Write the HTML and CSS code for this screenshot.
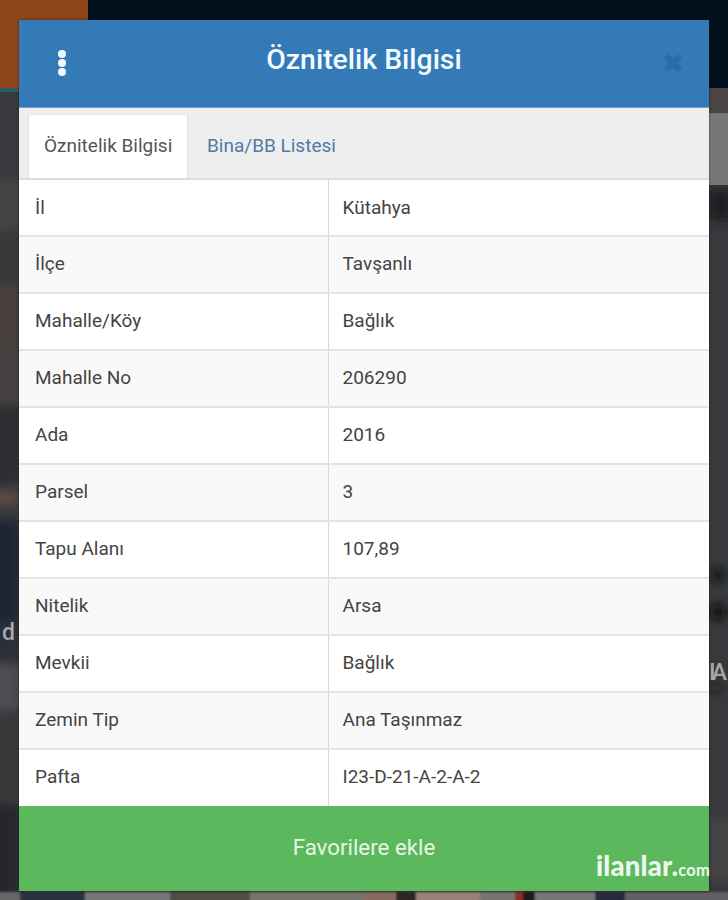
FILE: index.html
```html
<!DOCTYPE html>
<html lang="en">
<head>
  <meta charset="UTF-8" />
  <meta name="viewport" content="width=device-width, initial-scale=1.0"/>
  <title>Öznitelik Bilgisi</title>
  <link rel="stylesheet" href="styles.css">
</head>
<body>
  <!-- blurred aerial photo behind the dialog -->
  <svg class="map" width="728" height="900" viewBox="0 0 728 900" aria-hidden="true">
    <defs>
      <filter id="soft"><feGaussianBlur stdDeviation="5"/></filter>
      <filter id="slight"><feGaussianBlur stdDeviation="1"/></filter>
    </defs>
    <rect width="728" height="900" fill="#38393c"/>
    <g filter="url(#soft)">
      <rect x="-10" y="180" width="30" height="50" fill="#454546"/>
      <rect x="-10" y="232" width="30" height="50" fill="#39393b"/>
      <rect x="-10" y="285" width="30" height="60" fill="#4a3f3c"/>
      <rect x="-10" y="345" width="30" height="60" fill="#444042"/>
      <rect x="-10" y="405" width="30" height="80" fill="#2e2d30"/>
      <rect x="-10" y="490" width="30" height="16" fill="#5a4845"/>
      <rect x="-10" y="520" width="30" height="100" fill="#1f2531"/>
      <rect x="-10" y="620" width="30" height="40" fill="#2a2f3a"/>
      <rect x="-10" y="665" width="30" height="45" fill="#4d4e52"/>
      <rect x="-10" y="715" width="30" height="90" fill="#38393b"/>
      <rect x="-10" y="805" width="30" height="90" fill="#26272a"/>
      <circle cx="718" cy="575" r="7" fill="#111214"/>
      <circle cx="718" cy="612" r="8" fill="#0e0f11"/>
      <circle cx="715" cy="688" r="4" fill="#141517"/>
      <rect x="709" y="190" width="24" height="30" fill="#1d1f23"/>
      <rect x="709" y="820" width="24" height="60" fill="#454547"/>
    </g>
    <g filter="url(#slight)">
      <rect x="-4" y="892" width="24" height="12" fill="#666666"/>
      <rect x="20" y="892" width="65" height="12" fill="#2a3040"/>
      <rect x="85" y="892" width="85" height="12" fill="#77777a"/>
      <rect x="170" y="892" width="80" height="12" fill="#4f4d45"/>
      <rect x="250" y="892" width="114" height="12" fill="#77736d"/>
      <rect x="364" y="892" width="32" height="12" fill="#8a6a60"/>
      <rect x="396" y="892" width="20" height="12" fill="#2f2523"/>
      <rect x="416" y="892" width="64" height="12" fill="#9a8078"/>
      <rect x="480" y="892" width="35" height="12" fill="#77736f"/>
      <rect x="515" y="892" width="8" height="12" fill="#8c2a2a"/>
      <rect x="523" y="892" width="12" height="12" fill="#1a1a1a"/>
      <rect x="535" y="892" width="60" height="12" fill="#77777a"/>
      <rect x="595" y="892" width="30" height="12" fill="#252c3c"/>
      <rect x="625" y="892" width="107" height="12" fill="#5f6065"/>
    </g>
    <rect x="0" y="0" width="88" height="88" fill="#8d4418"/>
    <rect x="0" y="88" width="19" height="4" fill="#2c5a66"/>
    <rect x="88" y="0" width="640" height="88" fill="#02101e"/>
    <rect x="709" y="88" width="19" height="25" fill="#4a4544"/>
    <rect x="709" y="113" width="19" height="72" fill="#777777"/>
    <text class="map-label" x="2" y="640">d</text>
    <text class="map-label" x="709" y="680" textLength="18">IA</text>
  </svg>

  <div class="dialog">
    <header class="dialog-head">
      <span class="dots"><i></i><i></i><i></i></span>
      <h1>Öznitelik Bilgisi</h1>
      <svg class="close" width="22" height="22" viewBox="0 0 22 22" aria-hidden="true">
        <path d="M4 4 L18 18 M18 4 L4 18" stroke="#2f6ca3" stroke-width="6.5"/>
      </svg>
    </header>

    <nav class="tabs">
      <a class="tab active">Öznitelik Bilgisi</a>
      <a class="tab">Bina/BB Listesi</a>
    </nav>

    <table class="attrs">
      <tr><td>İl</td><td>Kütahya</td></tr>
      <tr><td>İlçe</td><td>Tavşanlı</td></tr>
      <tr><td>Mahalle/Köy</td><td>Bağlık</td></tr>
      <tr><td>Mahalle No</td><td>206290</td></tr>
      <tr><td>Ada</td><td>2016</td></tr>
      <tr><td>Parsel</td><td>3</td></tr>
      <tr><td>Tapu Alanı</td><td>107,89</td></tr>
      <tr><td>Nitelik</td><td>Arsa</td></tr>
      <tr><td>Mevkii</td><td>Bağlık</td></tr>
      <tr><td>Zemin Tip</td><td>Ana Taşınmaz</td></tr>
      <tr><td>Pafta</td><td>I23-D-21-A-2-A-2</td></tr>
    </table>

    <button class="fav">Favorilere ekle</button>
  </div>

  <div class="watermark">ilanlar<span class="dot">.</span><small>com</small></div>
</body>
</html>
```

FILE: styles.css
```css
* {
  box-sizing: border-box;
}

body {
  position: relative;
  width: 728px;
  height: 900px;
  margin: 0;
  overflow: hidden;
  font-family: Roboto, "Liberation Sans", sans-serif;
  background-color: #38393c;
  color: #333;
}

.map {
  position: absolute;
  top: 0;
  left: 0;
}

.map-label {
  font-family: Roboto, sans-serif;
  font-size: 23px;
  font-weight: 500;
  fill: #a8a8a8;
}

.dialog {
  position: relative;
  width: 690px;
  height: 871px;
  margin: 20px 0 0 19px;
  display: flex;
  flex-direction: column;
  box-shadow: 0 0 2px rgba(0, 0, 0, 0.5);
}

.dialog-head {
  height: 88px;
  flex: none;
  display: flex;
  align-items: center;
  justify-content: space-between;
  padding: 0 25px 0 39px;
  background: #337ab7;
  border-bottom: 1px solid #6fa6d6;
}

.dialog-head h1 {
  margin: 0 0 8px;
  font-size: 28.4px;
  font-weight: 500;
  color: #f2fbff;
}

.dots {
  display: flex;
  flex-direction: column;
  gap: 1px;
  margin-bottom: 1px;
}

.dots i {
  width: 8px;
  height: 8px;
  border-radius: 50%;
  background: #f2fbff;
}

.close {
  margin-bottom: 1px;
}

.tabs {
  height: 72px;
  flex: none;
  display: flex;
  padding: 6px 0 0 9px;
  background: #eeeeee;
  border-bottom: 2px solid #dddddd;
}

.tab {
  height: 64px;
  padding: 0 16px 2px;
  display: flex;
  align-items: center;
  font-size: 19px;
  color: #4f7ba6;
  white-space: nowrap;
}

.tab.active {
  width: 160px;
  background: white;
  color: #555;
  border: 1px solid #e6e6e6;
  border-bottom: none;
  padding-left: 15px;
  margin-right: 3px;
}

.attrs {
  width: 100%;
  flex: none;
  border-collapse: collapse;
  table-layout: fixed;
  background: white;
  font-size: 19px;
}

.attrs tr {
  height: 57px;
}

.attrs tr:first-child {
  height: 56px;
}

.attrs tr:nth-child(even) {
  background: #f9f9f9;
}

.attrs tr + tr td {
  border-top: 2px solid #e4e4e4;
  padding-bottom: 3px;
}

.attrs td {
  padding: 0 0 1px 14px;
  color: #444;
}

.attrs td:first-child {
  width: 309px;
  padding-left: 16px;
  border-right: 1px solid #d9d9d9;
}

.fav {
  flex: 1;
  border: none;
  background: #5cb85c;
  color: #e6f5e6;
  font-family: inherit;
  font-size: 22.3px;
  padding: 0 0 4px;
}

.watermark {
  position: absolute;
  left: 596px;
  top: 849px;
  font-family: Lato, Roboto, sans-serif;
  font-size: 27.5px;
  font-weight: 900;
  letter-spacing: 0.2px;
  color: #eef7ee;
  white-space: nowrap;
}

.watermark small {
  font-size: 16.5px;
  font-weight: 700;
}
```
